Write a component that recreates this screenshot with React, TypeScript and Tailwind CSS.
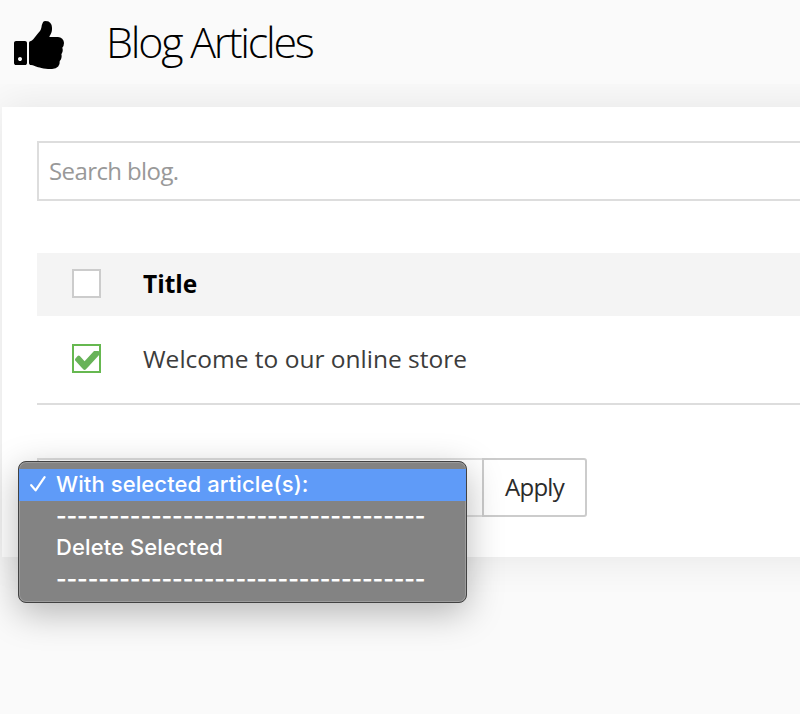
import React from 'react';
import clsx from 'clsx';

interface MenuOption {
    label: string;
    selected?: boolean;
    divider?: boolean;
}

const DIVIDER = '-'.repeat(35);

const MENU_OPTIONS: MenuOption[] = [
    { label: 'With selected article(s):', selected: true },
    { label: DIVIDER, divider: true },
    { label: 'Delete Selected' },
    { label: DIVIDER, divider: true },
];

const ThumbsUpIcon: React.FC = () => (
    <svg viewBox="64 128 1600 1536" className="w-[50px] h-12 fill-black" aria-hidden="true">
        <path d="M320 1344q0-26-19-45t-45-19q-27 0-45.5 19t-18.5 45q0 27 18.5 45.5t45.5 18.5q26 0 45-18.5t19-45.5zm160-512v640q0 26-19 45t-45 19h-288q-26 0-45-19t-19-45v-640q0-26 19-45t45-19h288q26 0 45 19t19 45zm1184 0q0 86-55 149 15 44 15 76 3 76-43 137 17 56 0 117-15 57-54 94 9 112-49 181-64 76-197 78h-129q-66 0-144-15.5t-121.5-29-120.5-39.5q-123-43-158-44-26-1-45-19.5t-19-44.5v-641q0-25 18-43.5t43-20.5q24-2 76-59t101-121q68-87 101-120 18-18 31-48t17.5-48.5 13.5-60.5q7-39 12.5-61t19.5-52 34-50q19-19 45-19 46 0 82.5 10.5t60 26 40 40.5 24 45 12 50 5 45 .5 39q0 38-9.5 76t-19 60-27.5 56q-3 6-10 18t-11 22-8 24h277q78 0 135 57t57 135z" />
    </svg>
);

const Checkbox: React.FC<{ checked?: boolean }> = ({ checked }) => (
    <span
        className={clsx(
            'flex items-center justify-center w-[29px] h-[29px] shrink-0 bg-white border-2',
            checked ? 'border-[#66b850]' : 'border-[#cccccc]'
        )}
    >
        {checked && (
            <svg viewBox="121 434 1550 1088" className="w-[25px] h-[19px] shrink-0 mt-[3px] ml-px fill-[#68b359]" preserveAspectRatio="none" aria-hidden="true">
                <path d="M1671 566q0 40-28 68l-724 724-136 136q-28 28-68 28t-68-28l-136-136-362-362q-28-28-28-68t28-68l136-136q28-28 68-28t68 28l294 295 656-657q28-28 68-28t68 28l136 136q28 28 28 68z" />
            </svg>
        )}
    </span>
);

const SelectMenu: React.FC = () => (
    <ul className="absolute -left-[19px] top-[3px] w-[449px] h-[142px] pt-[7px] rounded-[8px] bg-[#838383] border border-[#424242] shadow-[inset_0_0_0_1px_#9c9c9c,0_10px_36px_rgba(0,0,0,0.28)] font-['Inter',sans-serif] text-[22px] font-medium text-white">
        {MENU_OPTIONS.map((option, i) => (
            <li
                key={i}
                className={clsx(
                    'flex items-center h-[31.5px] pl-[37px] whitespace-nowrap',
                    option.selected && 'relative bg-[#5f9bf8]'
                )}
            >
                {option.selected && (
                    <svg viewBox="0 0 16 16" className="absolute left-[11px] top-[7px] w-4 h-4 fill-none stroke-white stroke-[2.2]" aria-hidden="true">
                        <path d="M1.2 9.2 5.6 14.4 14.6 1.2" strokeLinecap="round" strokeLinejoin="round" />
                    </svg>
                )}
                <span className={option.divider ? 'text-[23px] font-semibold tracking-[-0.15px]' : 'tracking-[0.1px]'}>{option.label}</span>
            </li>
        ))}
    </ul>
);

export default function App() {
    return (
        <div className="w-[800px] h-[714px] overflow-hidden bg-[#fafafa] font-['Open_Sans',sans-serif]">
            <header className="relative z-10 flex items-start h-[84px] pl-[14px] bg-[#fafafa]">
                <div className="pt-[21px]">
                    <ThumbsUpIcon />
                </div>
                <h1 className="ml-[42px] mt-[12px] text-[43px] leading-[60px] font-light tracking-[-2.25px] text-black whitespace-nowrap">Blog Articles</h1>
            </header>

            <main className="mt-[23px] ml-[2px] w-[860px] h-[450px] bg-white pl-[35px] pt-[34px] shadow-[0_0_40px_rgba(0,0,0,0.09)]">
                <input
                    type="text"
                    placeholder="Search blog."
                    className="block w-full h-[60px] px-[10px] pb-[2px] bg-white border-2 border-[#dddddd] text-[24px] tracking-[-0.6px] placeholder:text-[#999999]"
                />

                <div className="mt-[52px] text-[24.5px]">
                    <div className="flex items-center h-[63px] pl-[35px] pb-[2px] bg-[#f4f4f4]">
                        <Checkbox />
                        <span className="ml-[42px] pt-[2px] font-bold text-black">Title</span>
                    </div>
                    <div className="flex items-center h-[89px] pl-[35px] pb-[2px] border-b-2 border-[#dddddd]">
                        <Checkbox checked />
                        <span className="ml-[42px] pt-[2px] text-[#3c3c3c]">Welcome to our online store</span>
                    </div>
                </div>

                <div className="relative flex mt-[53px] h-[59px]">
                    <div className="w-[447px] border-2 border-r-0 border-[#dddddd] bg-white" />
                    <button className="-ml-[2px] w-[105px] pb-[2px] border-2 border-[#cccccc] rounded-r-[3px] bg-white text-[24px] tracking-[-0.7px] text-[#2b2b2b]">Apply</button>
                    <SelectMenu />
                </div>
            </main>
        </div>
    );
}
